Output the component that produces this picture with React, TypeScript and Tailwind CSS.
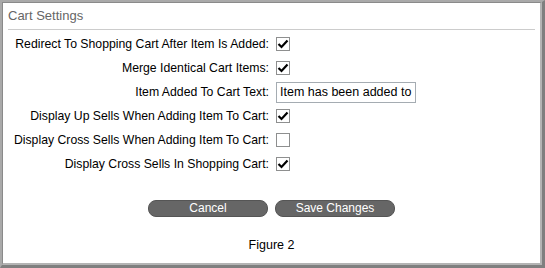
import React from 'react';

interface SettingRow {
  label: string;
  kind: 'check' | 'text';
  checked?: boolean;
  value?: string;
}

const rows: SettingRow[] = [
  { label: 'Redirect To Shopping Cart After Item Is Added:', kind: 'check', checked: true },
  { label: 'Merge Identical Cart Items:', kind: 'check', checked: true },
  { label: 'Item Added To Cart Text:', kind: 'text', value: 'Item has been added to cart' },
  { label: 'Display Up Sells When Adding Item To Cart:', kind: 'check', checked: true },
  { label: 'Display Cross Sells When Adding Item To Cart:', kind: 'check', checked: false },
  { label: 'Display Cross Sells In Shopping Cart:', kind: 'check', checked: true },
];

function CheckBox({ checked }: { checked?: boolean }) {
  return (
    <span className="flex h-[14px] w-[14px] items-center justify-center border border-[#8e8f8f] bg-white">
      {checked && (
        <svg width="12" height="12" viewBox="0 0 12 12">
          <path d="M1.5 6 L4.5 9 L10.5 2.5" fill="none" stroke="#000" strokeWidth="2.2" />
        </svg>
      )}
    </span>
  );
}

export default function App() {
  return (
    <div className="h-[268px] w-[545px] bg-white font-['Liberation_Sans',Arial,sans-serif]">
      <div className="flex h-full flex-col border-l-2 border-t-2 border-r-[3px] border-b-[3px] border-l-[#a9a9a9] border-t-[#a9a9a9] border-r-[#7f7f7f] border-b-[#7f7f7f]">
        <div className="flex flex-1 flex-col border-l border-t border-r-2 border-b-2 border-l-[#8a8a8a] border-t-[#8a8a8a] border-r-[#b4b4b4] border-b-[#b4b4b4]">
          <div className="mx-[5px] h-[27px] border-b border-[#cccccc] pt-[5px] text-[13px] leading-[15px] text-[#666666]">
            Cart Settings
          </div>

          <div className="mt-[2px] flex flex-col">
            {rows.map((row) => (
              <div key={row.label} className="grid h-[24px] grid-cols-[266px_1fr] items-center gap-[7px]">
                <span className="text-right text-[12.25px] text-black">{row.label}</span>
                {row.kind === 'check' ? (
                  <CheckBox checked={row.checked} />
                ) : (
                  <input
                    readOnly
                    value={row.value}
                    className="h-[21px] w-[140px] border border-[#a5acb2] bg-white px-[3px] text-[12.5px] text-black outline-none"
                  />
                )}
              </div>
            ))}
          </div>

          <div className="mt-[24px] flex justify-center gap-[7px]">
            <button className="h-[17px] w-[120px] rounded-[8px] border border-[#555555] bg-[#666666] text-[12px] leading-[15px] text-white">
              Cancel
            </button>
            <button className="h-[17px] w-[120px] rounded-[8px] border border-[#555555] bg-[#666666] text-[12px] leading-[15px] text-white">
              Save Changes
            </button>
          </div>

          <div className="mt-[19px] text-center text-[12.5px] text-black">Figure 2</div>
        </div>
      </div>
    </div>
  );
}
